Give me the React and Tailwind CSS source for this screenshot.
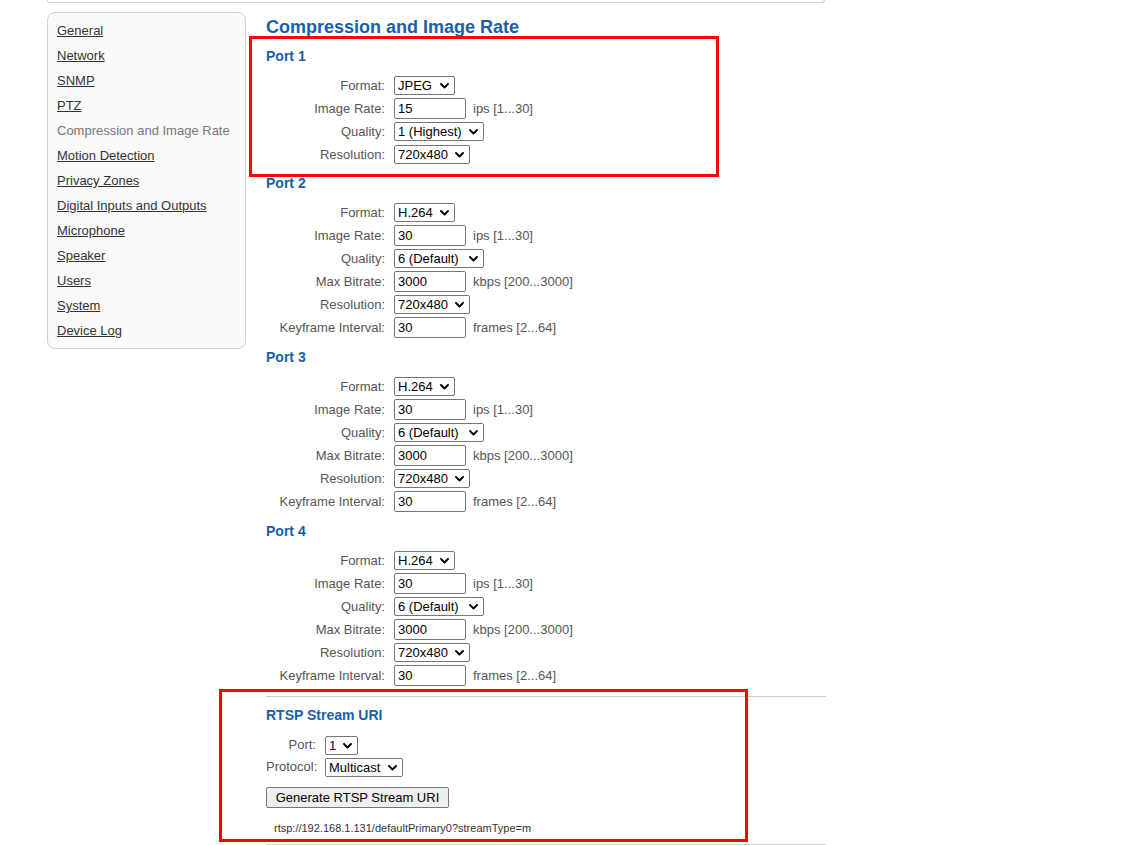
import React from "react";

const FONT = { fontFamily: '"Liberation Sans", Arial, sans-serif' };

function Chevron() {
  return (
    <svg width="9" height="6" viewBox="0 0 9 6" className="block">
      <path d="M1 1 L4.5 4.5 L8 1" fill="none" stroke="#000" strokeWidth="1.9" strokeLinecap="round" strokeLinejoin="round" />
    </svg>
  );
}

function Sel({ value, w }) {
  return (
    <div className="relative h-[19px] shrink-0" style={{ width: w }}>
      <div className="h-[19px] w-full border border-[#767676] rounded-[2px] bg-white pl-[3px] text-[13px] leading-[17px] text-black whitespace-nowrap overflow-hidden">
        {value}
      </div>
      <div className="absolute right-[6px] top-[7px]">
        <Chevron />
      </div>
    </div>
  );
}

function Inp({ value }) {
  return (
    <div className="h-[21px] w-[72px] shrink-0 border border-[#767676] rounded-[2px] bg-white pl-[3px] text-[13px] leading-[19px] text-black">
      {value}
    </div>
  );
}

function Row({ label, children, unit }) {
  return (
    <div className="flex items-center h-[23px]">
      <div className="w-[119px] text-right text-[13px] text-[#555] whitespace-nowrap">{label}</div>
      <div className="ml-[9px] flex items-center">{children}</div>
      {unit && <div className="ml-[7px] text-[13px] text-[#555] whitespace-nowrap">{unit}</div>}
    </div>
  );
}

function PortHeading({ children, mt }) {
  return (
    <div className={`${mt} h-[18px] leading-[18px] text-[14px] font-bold text-[#1a5ea8]`}>
      {children}
    </div>
  );
}

function H264Port({ name, mt }) {
  return (
    <div>
      <PortHeading mt={mt}>{name}</PortHeading>
      <div className="mt-[9px]">
        <Row label="Format:"><Sel value="H.264" w={61} /></Row>
        <Row label="Image Rate:" unit="ips [1...30]"><Inp value="30" /></Row>
        <Row label="Quality:"><Sel value="6 (Default)" w={90} /></Row>
        <Row label="Max Bitrate:" unit="kbps [200...3000]"><Inp value="3000" /></Row>
        <Row label="Resolution:"><Sel value="720x480" w={76} /></Row>
        <Row label="Keyframe Interval:" unit="frames [2...64]"><Inp value="30" /></Row>
      </div>
    </div>
  );
}

const navItems = [
  "General",
  "Network",
  "SNMP",
  "PTZ",
  "Compression and Image Rate",
  "Motion Detection",
  "Privacy Zones",
  "Digital Inputs and Outputs",
  "Microphone",
  "Speaker",
  "Users",
  "System",
  "Device Log",
];

export default function App() {
  return (
    <div className="relative w-[1125px] h-[845px] bg-white overflow-hidden" style={FONT}>
      {/* top container remnant */}
      <div className="ml-[47px] w-[778px] h-[3px] border border-t-0 border-[#cfcfcf] rounded-b-[4px]" />

      <div className="flex mt-[9px]">
        {/* Sidebar */}
        <div className="ml-[47px] w-[199px] self-start border border-[#d0d0d0] rounded-[8px] bg-[#fafafa] py-[5px] pl-[9px]">
          {navItems.map((item) => (
            <div key={item} className="h-[25px] leading-[25px] text-[13px]">
              {item === "Compression and Image Rate" ? (
                <span className="text-[#777]">{item}</span>
              ) : (
                <a href="#" className="text-[#333] underline">{item}</a>
              )}
            </div>
          ))}
        </div>

        {/* Content */}
        <div className="ml-[20px] w-[560px] pt-[4px]">
          <div className="h-[22px] leading-[22px] text-[18px] font-bold text-[#1a5ea8]">
            Compression and Image Rate
          </div>

          <div>
            <PortHeading mt="mt-[9px]">Port 1</PortHeading>
            <div className="mt-[9px]">
              <Row label="Format:"><Sel value="JPEG" w={61} /></Row>
              <Row label="Image Rate:" unit="ips [1...30]"><Inp value="15" /></Row>
              <Row label="Quality:"><Sel value="1 (Highest)" w={90} /></Row>
              <Row label="Resolution:"><Sel value="720x480" w={76} /></Row>
            </div>
          </div>

          <H264Port name="Port 2" mt="mt-[8px]" />
          <H264Port name="Port 3" mt="mt-[9px]" />
          <H264Port name="Port 4" mt="mt-[9px]" />

          <div className="mt-[9px] h-px bg-[#cccccc]" />

          <div className="mt-[9px] h-[18px] leading-[18px] text-[14px] font-bold text-[#1a5ea8]">
            RTSP Stream URI
          </div>

          <div className="mt-[10px]">
            <div className="flex items-center h-[22px]">
              <div className="w-[50px] text-right text-[13px] text-[#555]">Port:</div>
              <div className="ml-[9px]"><Sel value="1" w={33} /></div>
            </div>
            <div className="flex items-center h-[22px]">
              <div className="w-[50px] text-right text-[13px] text-[#555]">Protocol:</div>
              <div className="ml-[9px]"><Sel value="Multicast" w={78} /></div>
            </div>
          </div>

          <button className="mt-[9px] h-[21px] w-[183px] border border-[#767676] rounded-[2px] bg-[#efefef] text-[13px] leading-[19px] text-black">
            Generate RTSP Stream URI
          </button>

          <div className="mt-[12px] ml-[8px] h-[14px] leading-[14px] text-[11px] text-[#333]">
            rtsp://192.168.1.131/defaultPrimary0?streamType=m
          </div>

          <div className="mt-[9px] h-px bg-[#cccccc]" />
        </div>
      </div>

      {/* red annotation boxes */}
      <div className="absolute left-[249px] top-[36px] w-[470px] h-[141px] border-[3px] border-[#ff0000]" />
      <div className="absolute left-[219px] top-[689px] w-[529px] h-[153px] border-[3px] border-[#ff0000]" />
    </div>
  );
}
